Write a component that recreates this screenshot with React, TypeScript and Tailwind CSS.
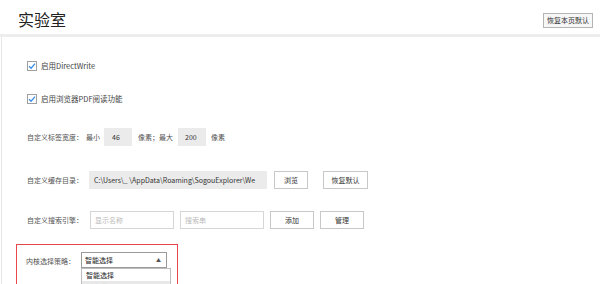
import React from "react";

const font = { fontFamily: '"Noto Sans CJK SC", "Noto Sans", sans-serif' };

function Check() {
  return (
    <div className="w-[10px] h-[10px] border border-[#a0a0a0] bg-white flex items-center justify-center shrink-0">
      <svg width="8" height="8" viewBox="0 0 8 8">
        <path d="M1 4.2 L3.1 6.2 L7 1.6" fill="none" stroke="#3a8ee6" strokeWidth="1.3" />
      </svg>
    </div>
  );
}

function Btn({ children, w }: { children: React.ReactNode; w: string }) {
  return (
    <div className={`${w} h-[18px] border border-[#c8c8c8] bg-white flex items-center justify-center text-[7px] text-[#333] whitespace-nowrap shrink-0`}>
      {children}
    </div>
  );
}

export default function App() {
  return (
    <div className="w-[600px] h-[284px] overflow-hidden bg-white flex flex-col text-[#555] whitespace-nowrap" style={font}>
      <div className="h-[34px] flex items-center justify-between pl-[18px] pr-[7px] shrink-0">
        <div className="text-[16px] text-[#222] leading-none mt-[4px]">实验室</div>
        <div className="w-[50px] h-[15px] border border-[#b4b4b4] bg-[#f7f7f7] flex items-center justify-center text-[7px] text-[#333] mt-[6px]">
          恢复本页默认
        </div>
      </div>
      <div className="h-[3px] bg-[#ededed] shrink-0" />
      <div className="flex-1 border-l border-[#e6e6e6] ml-[1px] flex flex-col pl-[25px] text-[7px]">
        <div className="h-[18px] mt-[20px] flex items-center">
          <Check />
          <span className="ml-[4px] text-[#444] text-[7.5px]">启用DirectWrite</span>
        </div>
        <div className="h-[18px] mt-[15px] flex items-center">
          <Check />
          <span className="ml-[4px] text-[#444] text-[7.5px]">启用浏览器PDF阅读功能</span>
        </div>
        <div className="h-[18px] mt-[20px] flex items-center">
          <span className="w-[59px] shrink-0">自定义标签宽度：</span>
          <span className="w-[18px] shrink-0">最小</span>
          <div className="w-[28px] h-[18px] bg-[#ebebeb] flex items-center pl-[8px] text-[#333] shrink-0">46</div>
          <span className="ml-[6px] w-[40px] shrink-0">像素；最大</span>
          <div className="w-[28px] h-[18px] bg-[#ebebeb] flex items-center pl-[7px] text-[#333] shrink-0">200</div>
          <span className="ml-[5px]">像素</span>
        </div>
        <div className="h-[18px] mt-[25px] flex items-center">
          <span className="w-[62px] shrink-0">自定义缓存目录：</span>
          <div className="w-[178px] h-[18px] bg-[#ebebeb] flex items-center pl-[5px] text-[#333] overflow-hidden shrink-0">
            <span>C:\Users\_ \AppData\Roaming\SogouExplorer\We</span>
          </div>
          <div className="ml-[7px]"><Btn w="w-[34px]">浏览</Btn></div>
          <div className="ml-[15px]"><Btn w="w-[45px]">恢复默认</Btn></div>
        </div>
        <div className="h-[18px] mt-[22px] flex items-center">
          <span className="w-[63px] shrink-0">自定义搜索引擎：</span>
          <div className="w-[84px] h-[18px] border border-[#d6d6d6] flex items-center pl-[4px] text-[#bbb] shrink-0">显示名称</div>
          <div className="ml-[6px] w-[84px] h-[18px] border border-[#d6d6d6] flex items-center pl-[4px] text-[#bbb] shrink-0">搜索串</div>
          <div className="ml-[6px]"><Btn w="w-[44px]">添加</Btn></div>
          <div className="ml-[6px]"><Btn w="w-[44px]">管理</Btn></div>
        </div>
        <div className="mt-[15px] ml-[-11px] w-[162px] h-[60px] border-[1.5px] border-[#e8474c] shrink-0 pt-[7px] pl-[9px]">
          <div className="flex items-center">
            <span className="w-[55px] mt-[2px] shrink-0">内核选择策略：</span>
            <div className="relative w-[86px] h-[16px] border border-[#9a9a9a] bg-white flex items-center justify-between pl-[3px] pr-[5px] text-[#222] shrink-0">
              <span>智能选择</span>
              <span className="text-[5px] text-[#555]">▲</span>
              <div className="absolute left-[-1px] top-[15px] w-[90px] border border-[#bdbdbd] bg-white flex flex-col">
                <div className="h-[12px] flex items-center pl-[4px] text-[#222]">智能选择</div>
                <div className="h-[12px] flex items-center pl-[4px] bg-[#e8e8e8] text-[#888]">兼容模式</div>
              </div>
            </div>
          </div>
        </div>
      </div>
    </div>
  );
}
